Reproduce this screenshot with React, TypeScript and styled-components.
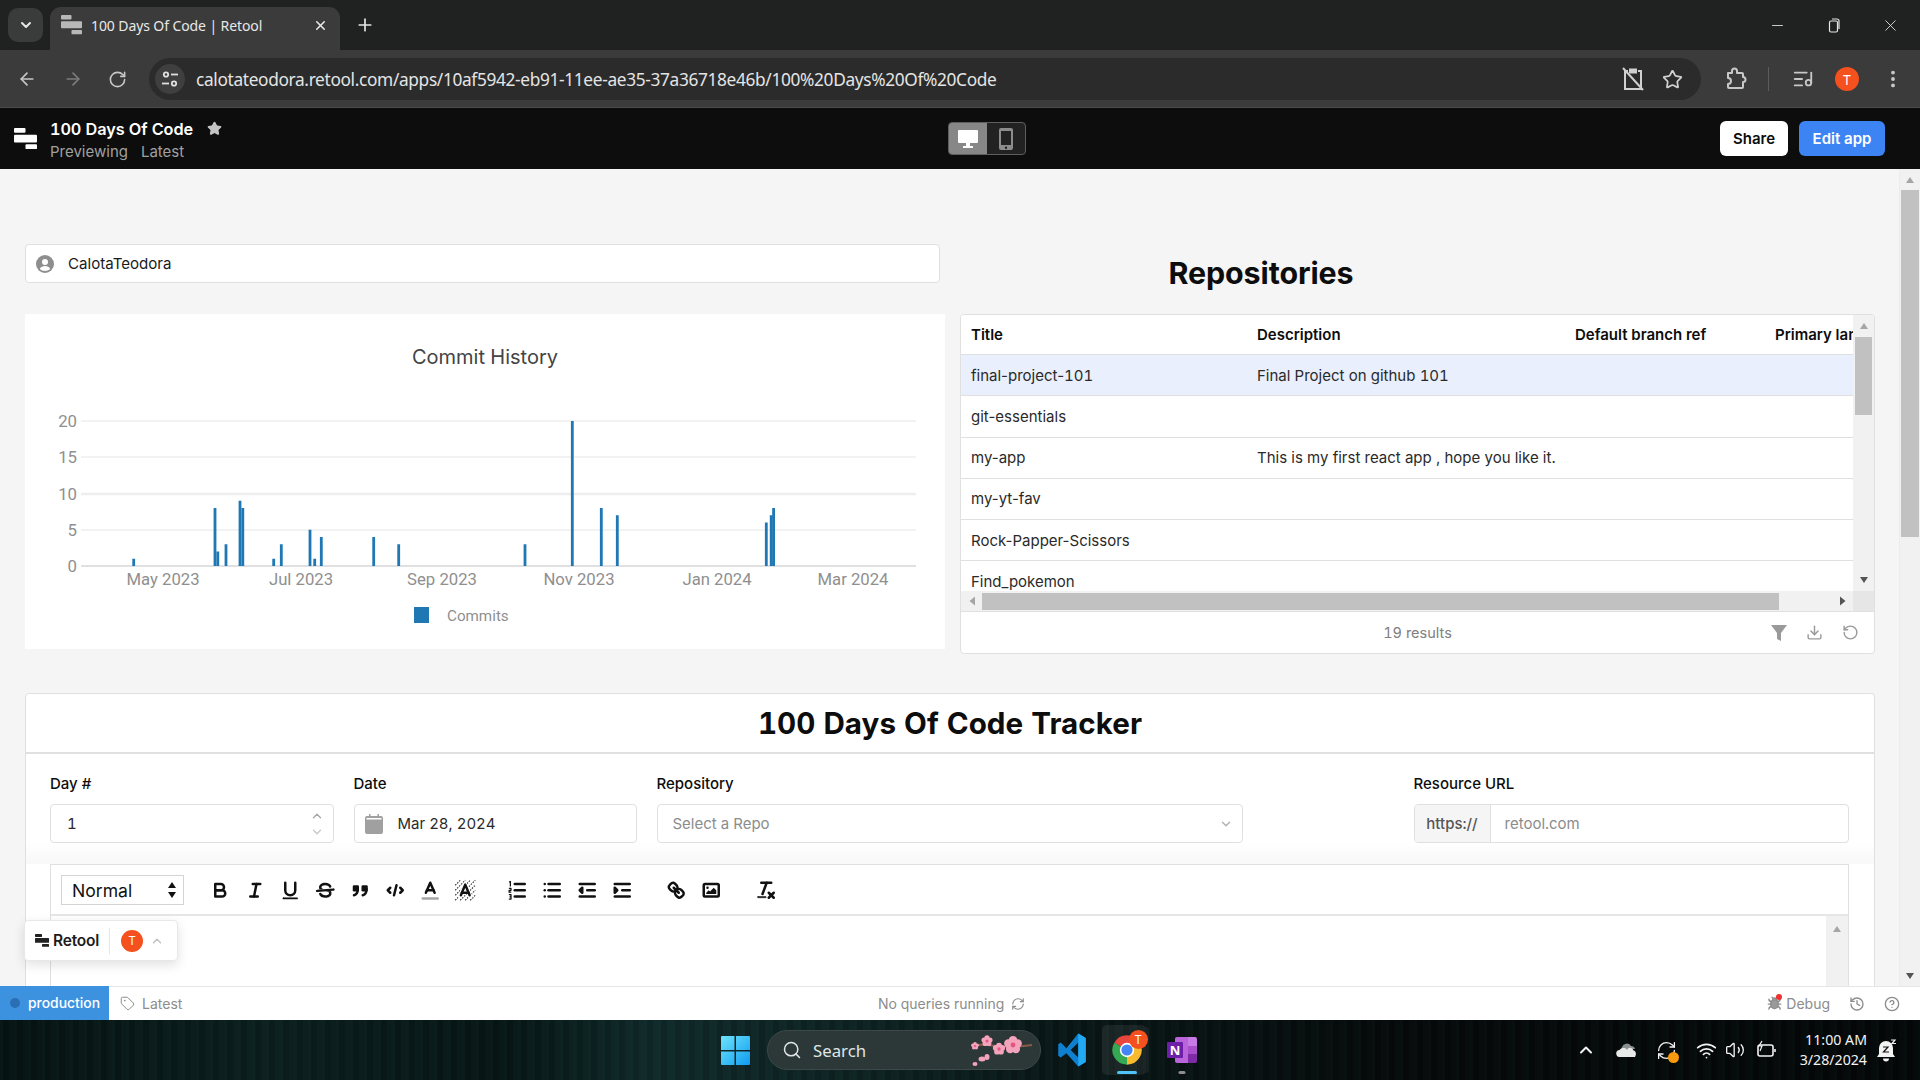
import React from 'react';
import styled, { createGlobalStyle } from 'styled-components';
import {
  ArrowLeft, ArrowRight, RotateCw, Plus, X, ChevronDown, ChevronUp, Star, Minus, EllipsisVertical,
  Search, Wifi, Volume2, Download, RotateCcw, Tag, History, CircleHelp, Bug, ListMusic, RefreshCw,
} from 'lucide-react';

const Global = createGlobalStyle`
  html, body { margin: 0; padding: 0; background: #111; overflow: hidden; }
  * { box-sizing: border-box; }
  body { font-family: Inter, "Liberation Sans", sans-serif; font-variant-numeric: tabular-nums; }
`;

const Screen = styled.div`
  width: 1920px; height: 1080px; display: flex; flex-direction: column; overflow: hidden; position: relative;
`;

/* ---------- browser chrome ---------- */
const TabStrip = styled.div`
  height: 50px; background: #202221; display: flex; align-items: flex-end; padding-left: 8px; color: #e6e6e6;
  font-family: "Noto Sans", Roboto, sans-serif; flex: none;
`;
const TabSearch = styled.div`
  width: 35px; height: 34px; margin-bottom: 8px; border-radius: 10px; background: #3a3b3b;
  display: flex; align-items: center; justify-content: center; color: #e6e6e6;
`;
const Tab = styled.div`
  width: 290px; height: 43px; margin-left: 7px; background: #3b3b3b; border-radius: 11px 11px 0 0;
  display: flex; align-items: center; padding: 0 12px 7px 11px; gap: 9px; font-size: 14px; color: #e8e8e8;
`;
const TabTitle = styled.span`flex: 1; white-space: nowrap; letter-spacing: -0.1px;`;
const TabPlus = styled.div`margin: 0 0 7px 15px; height: 36px; display: flex; align-items: center; color: #e6e6e6;`;
const WindowButtons = styled.div`
  margin-left: auto; height: 50px; display: flex; align-items: center; padding-right: 20px; gap: 39.5px; color: #e6e6e6;
`;
const Toolbar = styled.div`
  height: 58px; background: #3b3b3b; display: flex; align-items: center; padding: 1px 16px 0 17px; color: #c8c8c8;
  border-bottom: 1px solid #4a4a4a; flex: none;
`;
const NavButtons = styled.div`display: flex; gap: 25.7px; align-items: center; width: 133px;`;
const UrlBar = styled.div`
  width: 1552px; height: 42px; border-radius: 21px; background: #2b2b2b; display: flex; align-items: center;
  padding: 0 18px 0 6px; color: #e4e4e4; flex: none;
`;
const TuneBadge = styled.div`
  width: 30px; height: 30px; border-radius: 50%; background: #3f3f3f; display: flex; align-items: center; justify-content: center;
`;
const UrlText = styled.span`
  margin-left: 11px; font: 400 17.3px "Noto Sans", Roboto, sans-serif; letter-spacing: -0.345px; white-space: nowrap; flex: 1;
`;
const UrlActions = styled.div`display: flex; gap: 18.5px; align-items: center; color: #d0d0d0;`;
const ToolActions = styled.div`
  flex: 1; display: flex; align-items: center; padding-left: 24px; color: #c8c8c8;
`;
const ToolSep = styled.div`width: 1px; height: 24px; background: #5c5c5c; margin: 0 23px 0 21px;`;
const Avatar = styled.div<{ $size: number; $font: number }>`
  width: ${p => p.$size}px; height: ${p => p.$size}px; border-radius: 50%; background: #f4511e; color: #fff;
  display: flex; align-items: center; justify-content: center; font: 400 ${p => p.$font}px "Noto Sans", sans-serif; flex: none;
`;

/* ---------- retool app header ---------- */
const AppHeader = styled.header`
  height: 61px; background: #0d0d0d; display: flex; align-items: center; padding: 0 35px 0 14px; flex: none;
`;
const HeaderTitleBlock = styled.div`
  display: flex; flex-direction: column; margin-left: 13px; gap: 2px; width: 898px; padding-top: 2px;
`;
const TitleRow = styled.div`
  display: flex; align-items: center; gap: 14px; color: #fff; font-weight: 600; font-size: 16.3px; height: 22px; letter-spacing: -0.1px;
`;
const SubRow = styled.div`
  display: flex; gap: 13px; color: #a0a0a0; font-size: 15px; height: 20px; align-items: center;
`;
const ViewToggle = styled.div`
  width: 78px; height: 33px; border: 1px solid #5e5e5e; border-radius: 4px; background: #222; display: flex; overflow: hidden; flex: none;
`;
const ToggleCell = styled.div<{ $active?: boolean }>`
  flex: 1; display: flex; align-items: center; justify-content: center;
  background: ${p => (p.$active ? '#878787' : 'transparent')};
  color: ${p => (p.$active ? '#fff' : '#8c8c8c')};
`;
const HeaderActions = styled.div`margin-left: auto; display: flex; gap: 11px;`;
const HeaderButton = styled.button<{ $primary?: boolean }>`
  height: 35px; border: 0; border-radius: 6px; font: 600 15px Inter, sans-serif;
  width: ${p => (p.$primary ? '86px' : '68px')};
  background: ${p => (p.$primary ? '#3c84f4' : '#fff')};
  color: ${p => (p.$primary ? '#fff' : '#0d0d0d')};
  padding: 0;
`;

/* ---------- page ---------- */
const Viewport = styled.div`flex: 1; min-height: 0; display: flex; background: #f5f5f5; position: relative;`;
const PageContent = styled.main`flex: 1; min-width: 0; overflow: hidden; padding: 75px 24px 0 25px;`;
const TopGrid = styled.div`display: grid; grid-template-columns: 920px 915px; column-gap: 15px;`;
const LeftColumn = styled.div`display: flex; flex-direction: column; gap: 31px;`;
const RightColumn = styled.div`display: flex; flex-direction: column;`;
const NameInput = styled.div`
  width: 915px; height: 39px; background: #fff; border: 1px solid #e0e0e0; border-radius: 4px;
  display: flex; align-items: center; padding-left: 10px; gap: 14px; font-size: 15.1px; color: #1a1a1a;
`;
const ChartCard = styled.section`height: 335px; background: #fff; width: 920px;`;
const Heading = styled.h2`
  margin: 0; height: 70px; width: 602px; padding-top: 9px; text-align: center; font-size: 30.4px; font-weight: 700; color: #0d0d0d; line-height: 40px; letter-spacing: -0.1px;
`;
const TableCard = styled.section`
  height: 340px; background: #fff; border: 1px solid #e0e0e0; border-radius: 4px; display: flex; flex-direction: column; overflow: hidden;
`;
const TableBody = styled.div`height: 276px; display: flex; flex: none;`;
const TableMain = styled.div`flex: 1; min-width: 0; overflow: hidden;`;
const Row = styled.div<{ $head?: boolean; $selected?: boolean }>`
  height: ${p => (p.$head ? '40px' : '41.25px')}; display: grid; grid-template-columns: 286px 318px 200px 200px;
  border-bottom: 1px solid #e0e0e0; align-items: center; font-size: 15px; color: ${p => (p.$head ? '#0d0d0d' : '#2a2a2a')};
  font-weight: ${p => (p.$head ? 600 : 400)}; white-space: nowrap; font-variant-numeric: normal;
  background: ${p => (p.$selected ? '#e9effd' : '#fff')};
`;
const Cell = styled.div`padding-left: 10px; overflow: hidden;`;
const Digits = styled.span`font-variant-numeric: tabular-nums;`;
const VScroll = styled.div<{ $width: number }>`
  width: ${p => p.$width}px; background: #f1f1f1; display: flex; flex-direction: column; align-items: center; flex: none;
`;
const ScrollArrowBox = styled.div<{ $size: number }>`
  height: ${p => p.$size}px; width: 100%; display: flex; align-items: center; justify-content: center; flex: none;
`;
const VThumb = styled.div<{ $height: number; $inset: number }>`
  height: ${p => p.$height}px; width: calc(100% - ${p => p.$inset * 2}px); background: #c1c1c1; flex: none;
`;
const ScrollFill = styled.div`flex: 1;`;
const HScroll = styled.div`
  height: 21px; background: #f1f1f1; display: flex; align-items: center; flex: none; border-bottom: 1px solid #e0e0e0;
`;
const HArrow = styled.div`width: 21px; display: flex; justify-content: center; flex: none;`;
const HThumb = styled.div`width: 797px; height: 17px; background: #c1c1c1; flex: none;`;
const HCorner = styled.div`width: 21px; height: 100%; background: #e6e6e6; flex: none;`;
const TableFooter = styled.div`
  flex: 1; display: flex; align-items: center; padding-right: 15px; color: #808080; font-size: 14.5px; position: relative; justify-content: flex-end;
`;
const ResultCount = styled.span`position: absolute; left: 0; right: 0; text-align: center;`;
const FooterIcons = styled.div`display: flex; gap: 19px; color: #9a9a9a; align-items: center;`;

const TrackerCard = styled.section`
  margin-top: 39px; width: 1850px; height: 500px; background: #fff; border: 1px solid #e0e0e0; border-radius: 4px 4px 0 0;
`;
const TrackerHead = styled.div`
  height: 60px; border-bottom: 2px solid #e0e0e0; display: flex; align-items: center; justify-content: center;
  font-size: 29.6px; font-weight: 700; color: #0d0d0d; letter-spacing: 0.05px;
`;
const FormZone = styled.div`
  padding: 20px 25px 21px 24px; display: flex; gap: 19.5px;
  background: linear-gradient(#fff 0, #fff 88px, #f8f8f8 110px);
`;
const Field = styled.div<{ $width: number; $push?: boolean }>`
  width: ${p => p.$width}px; display: flex; flex-direction: column; gap: 10px; flex: none;
  margin-left: ${p => (p.$push ? 'auto' : '0')};
`;
const FieldLabel = styled.label`height: 20px; line-height: 20px; font-size: 15px; font-weight: 500; color: #0d0d0d;`;
const InputBox = styled.div<{ $muted?: boolean }>`
  height: 39px; border: 1px solid #e0e0e0; border-radius: 4px; background: #fff; display: flex; align-items: center;
  font-size: 15px; color: ${p => (p.$muted ? '#8c8c8c' : '#2a2a2a')}; overflow: hidden;
`;
const BoxPad = styled.span<{ $left: number }>`padding-left: ${p => p.$left}px; flex: 1;`;
const Spinner = styled.div`
  width: 31px; padding-right: 2px; display: flex; flex-direction: column; align-items: center; gap: 2px; color: #a6a6a6;
`;
const DateIcon = styled.span`margin-left: 10px; display: flex;`;
const SelectChevron = styled.span`padding-right: 9px; display: flex; color: #b0b0b0;`;
const Addon = styled.span`
  width: 76px; height: 100%; background: #f5f5f5; display: flex; align-items: center; justify-content: center;
  color: #555; font-weight: 500; border-right: 1px solid #e0e0e0; flex: none;
`;
const Editor = styled.div`margin: 0 25px 0 24px; border: 1px solid #e0e0e0; border-bottom: 0; background: #fff;`;
const EditorBar = styled.div`
  height: 51px; border-bottom: 2px solid #e6e6e6; display: flex; align-items: center; padding: 1px 0 0 10px;
`;
const FormatSelect = styled.div`
  width: 123px; height: 30px; border: 1px solid #d4d4d4; display: flex; align-items: center; justify-content: space-between;
  padding: 0 6px 0 10px; font-size: 17.6px; color: #111; margin-right: 24.5px;
`;
const ToolGroup = styled.div<{ $gap: number }>`display: flex; align-items: center; gap: 12.5px; margin-right: ${p => p.$gap}px;`;
const ToolIcon = styled.svg`
  width: 22.5px; height: 22.5px; fill: none; stroke: #111; stroke-width: 2; stroke-linecap: round; stroke-linejoin: round; flex: none;
`;
const EditorBody = styled.div`height: 200px; display: flex; justify-content: flex-end;`;

const PageScroll = styled(VScroll)`border-left: 1px solid #ececec;`;

/* floating badge */
const RetoolBadge = styled.div`
  position: absolute; left: 24px; bottom: 25px; width: 154px; height: 41px; background: #fff; border: 1px solid #e8e8e8; border-radius: 4px;
  box-shadow: 0 4px 12px rgba(0,0,0,0.12); display: flex; align-items: center; padding-left: 10px;
`;
const BadgeName = styled.span`font-size: 15.5px; font-weight: 600; color: #1c1c1c; margin-left: 4px; letter-spacing: -0.2px;`;
const BadgeDivider = styled.div`width: 1px; height: 26px; background: #e6e6e6; margin: 0 11px 0 10px;`;

/* ---------- status bar ---------- */
const StatusBar = styled.footer`
  height: 34px; background: #fff; border-top: 1px solid #e6e6e6; display: flex; align-items: center; flex: none;
  font-size: 14px; color: #8c8c8c; position: relative;
`;
const EnvChip = styled.div`
  width: 109px; height: 34px; margin-top: -1px; background: #3d92e0; color: #fff; font-weight: 500; font-size: 13.9px; display: flex; align-items: center; padding-left: 10px; gap: 8px; flex: none;
`;
const EnvDot = styled.span`width: 10px; height: 10px; border-radius: 50%; background: #2a6fb3;`;
const StatusTag = styled.div`display: flex; align-items: center; gap: 7px; margin-left: 11px; width: 758px;`;
const StatusMiddle = styled.div`display: flex; align-items: center; gap: 7px; width: 390px;`;
const StatusRight = styled.div`margin-left: auto; display: flex; align-items: center; padding-right: 20px;`;
const DebugLabel = styled.span`margin-left: 4px; margin-right: 19px;`;
const BugWrap = styled.span`position: relative; display: flex;`;
const BugDot = styled.span`position: absolute; top: -2px; right: 0; width: 6px; height: 6px; border-radius: 50%; background: #f03030;`;

/* ---------- taskbar ---------- */
const Taskbar = styled.div`
  height: 60px; flex: none; display: flex; align-items: center; color: #fff; padding-left: 721px; font-family: "Noto Sans", sans-serif;
  background:
    repeating-linear-gradient(90deg, rgba(60,110,105,0.05) 0 3px, rgba(0,0,0,0.08) 3px 9px, rgba(60,110,105,0.03) 9px 14px),
    linear-gradient(90deg, #061312 0%, #0b1f1e 14%, #071615 26%, #10292a 34%, #0e2222 45%, #0a1717 55%, #060a0b 72%, #040708 100%);
`;
const SearchPill = styled.div`
  width: 274px; height: 40px; margin-left: 17px; border-radius: 20px; background: #2c3838; display: flex; align-items: center; padding-left: 14px; gap: 11px;
  font-size: 16.8px; color: #dfe5e5; border: 1px solid #3d4848;
`;
const PillArt = styled.span`margin-left: auto; margin-right: 6px; display: flex;`;
const TaskIcon = styled.div<{ $left: number; $width: number; $active?: boolean }>`
  width: ${p => p.$width}px; height: 50px; margin-left: ${p => p.$left}px; display: flex; align-items: center; justify-content: center; position: relative; flex: none;
  border-radius: 5px; background: ${p => (p.$active ? 'rgba(255,255,255,0.07)' : 'transparent')};
  padding-left: ${p => (p.$active ? '6px' : '0')};
  box-shadow: ${p => (p.$active ? '5px 0 0 -2px rgba(255,255,255,0.05)' : 'none')};
`;
const TaskBadge = styled.div`position: absolute; top: 4.5px; right: -1.5px;`;
const TaskMark = styled.span<{ $active?: boolean }>`
  position: absolute; bottom: 1px; left: ${p => (p.$active ? '57%' : '50%')}; transform: translateX(-50%); height: 3.5px; border-radius: 2px;
  width: ${p => (p.$active ? '20px' : '7px')}; background: ${p => (p.$active ? '#4fc3f7' : '#8d8d8d')};
`;
const Tray = styled.div`
  margin-left: auto; display: flex; align-items: center; height: 100%; padding-right: 23px; color: #f2f2f2;
`;
const TrayItem = styled.span<{ $left: number }>`margin-left: ${p => p.$left}px; display: flex; position: relative;`;
const SyncDot = styled.span`position: absolute; right: -2px; bottom: -2px; width: 11px; height: 11px; border-radius: 50%; background: #f79a0e;`;
const Clock = styled.div`
  margin-left: 5px; display: flex; flex-direction: column; align-items: flex-end; font-size: 14.2px; line-height: 20px; width: 85px;
`;

/* ---------- drawings ---------- */
const RetoolLogo = ({ w, color }: { w: number; color: string }) => (
  <svg width={w} height={w * 0.92} viewBox="0 0 24 22" fill={color}>
    <rect x="0" y="0" width="12" height="5" rx="1" />
    <rect x="0" y="7" width="24" height="8" rx="1" />
    <rect x="12" y="17" width="12" height="5" rx="1" />
  </svg>
);
const TriIcon = ({ dir, color = '#8a8a8a', s = 10 }: { dir: 'u' | 'd' | 'l' | 'r'; color?: string; s?: number }) => {
  const pts = { u: '1,8 9,8 5,2', d: '1,2 9,2 5,8', l: '8,0.5 8,9.5 2.5,5', r: '2,0.5 2,9.5 7.5,5' }[dir];
  return <svg width={s} height={s} viewBox="0 0 10 10"><polygon points={pts} fill={color} /></svg>;
};

const bars: [number, number][] = [
  [133.7, 1], [215, 8], [217.8, 2], [226, 3], [240, 9], [242.8, 8], [273.7, 1], [281.3, 3], [310, 5], [314.7, 1], [321.3, 4],
  [373.7, 4], [398.7, 3], [525, 3], [572.3, 20], [601.3, 8], [617.3, 7], [766.3, 6], [771.2, 7], [773.6, 8],
];
const months: [number, string][] = [[163, 'May 2023'], [301, 'Jul 2023'], [442, 'Sep 2023'], [579, 'Nov 2023'], [717, 'Jan 2024'], [853, 'Mar 2024']];
const gridVals: [number, number, number][] = [[20, 421, 1.5], [15, 457, 1.5], [10, 494, 2.5], [5, 530, 1.5], [0, 566, 1.5]];

const CommitChart = () => (
  <svg width="920" height="335" viewBox="25 314 920 335" fontFamily="Roboto, Inter, sans-serif">
    <text x="485" y="364" textAnchor="middle" fontSize="20" fontFamily="Inter, sans-serif" fill="#444">Commit History</text>
    {gridVals.map(([v, y, sw]) => (
      <g key={v}>
        <line x1="81" x2="916" y1={y} y2={y} stroke={v === 0 ? '#d6d6d6' : '#eeeeee'} strokeWidth={sw} />
        <text x="77" y={y + 6} textAnchor="end" fontSize="16.8" fill="#8f8f8f">{v}</text>
      </g>
    ))}
    {bars.map(([x, v]) => (
      <rect key={x} x={x - 1.4} width="2.8" y={566 - v * 7.25} height={v * 7.25} fill="#1f77b4" />
    ))}
    {months.map(([x, t]) => (
      <text key={t} x={x} y="585" textAnchor="middle" fontSize="16.7" fill="#8f8f8f">{t}</text>
    ))}
    <rect x="414" y="607" width="15" height="16" fill="#1f77b4" />
    <text x="447" y="621" fontSize="15.2" fill="#8f8f8f">Commits</text>
  </svg>
);

const UserCircle = () => (
  <svg width="18" height="18" viewBox="0 0 18 18">
    <circle cx="9" cy="9" r="9" fill="#8e8e8e" />
    <circle cx="9" cy="7" r="3" fill="#fff" />
    <path d="M3.8 14c1-2.200 3-3 5.200-3s4.200.8 5.200 3c-1.300 1.300-3.100 2-5.200 2s-3.900-.7-5.200-2z" fill="#fff" />
  </svg>
);

const qlIcons: Record<string, React.ReactNode> = {
  bold: <><path d="M5,4H9.500A2.500,2.500,0,0,1,12,6.500v0A2.500,2.500,0,0,1,9.500,9H5V4Z" /><path d="M5,9h5.500A2.500,2.500,0,0,1,13,11.500v0A2.500,2.500,0,0,1,10.500,14H5V9Z" /></>,
  italic: <><line x1="7" x2="13" y1="4" y2="4" /><line x1="5" x2="11" y1="14" y2="14" /><line x1="8" x2="10" y1="14" y2="4" /></>,
  underline: <><path d="M5,3V9a4,4,0,0,0,8,0V3" /><rect x="3" y="15" width="12" height="1" rx=".5" fill="#111" strokeWidth="0.4" /></>,
  strike: <><line x1="15.500" x2="2.500" y1="8.500" y2="9.500" /><path stroke="none" fill="#111" d="M9.007,8C6.542,7.791,6,7.519,6,6.500,6,5.792,7.283,5,9,5c1.571,0,2.765.679,2.969,1.309a1,1,0,0,0,1.900-.617C13.356,4.106,11.354,3,9,3,6.200,3,4,4.538,4,6.500a3.200,3.200,0,0,0,.5,1.843Z" /><path stroke="none" fill="#111" d="M8.984,10C11.457,10.208,12,10.479,12,11.500c0,.708-1.283,1.500-3,1.500-1.571,0-2.765-.679-2.969-1.309a1,1,0,1,0-1.900.617C4.644,13.894,6.646,15,9,15c2.800,0,5-1.538,5-3.500a3.200,3.200,0,0,0-.5-1.843Z" /></>,
  quote: <><rect x="3" y="5" width="5" height="5" rx="1" fill="#111" stroke="none" /><rect x="10" y="5" width="5" height="5" rx="1" fill="#111" stroke="none" /><path d="M7,8c0,3-1,4.500-3,5" /><path d="M14,8c0,3-1,4.500-3,5" /></>,
  code: <><polyline points="5 7 3 9 5 11" /><polyline points="13 7 15 9 13 11" /><line x1="10" x2="8" y1="5" y2="13" /></>,
  color: <><line x1="3" x2="15" y1="15.500" y2="15.500" stroke="#a6a6a6" /><polyline points="5.500 11 9 3 12.500 11" /><line x1="11.630" x2="6.380" y1="9" y2="9" /></>,
  background: <>
    <g stroke="#333" strokeWidth="0.9" strokeLinecap="butt" strokeDasharray="1.200 1">
      <line x1="1" y1="5" x2="5" y2="1" /><line x1="1" y1="9" x2="9" y2="1" /><line x1="1" y1="13" x2="13" y2="1" />
      <line x1="1" y1="17" x2="17" y2="1" /><line x1="5" y1="17" x2="17" y2="5" /><line x1="9" y1="17" x2="17" y2="9" /><line x1="13" y1="17" x2="17" y2="13" />
    </g>
    <polyline points="5 14 9 4.500 13 14" stroke="#fff" strokeWidth="3.600" />
    <polyline points="5.500 13 9 4.500 12.500 13" />
    <line x1="11.630" x2="6.380" y1="11" y2="11" />
  </>,
  ol: <><line x1="7" x2="15" y1="4" y2="4" /><line x1="7" x2="15" y1="9" y2="9" /><line x1="7" x2="15" y1="14" y2="14" /><g strokeWidth="1" strokeLinecap="butt"><path d="M2.500 2.500l1-.5v4" /><path d="M2.300 7.500h1.700v1.500h-1.500v1.500h1.700" /><path d="M2.300 12.500h1.700v3.500h-1.700M2.800 14.200h1" /></g></>,
  ul: <><line x1="6" x2="15" y1="4" y2="4" /><line x1="6" x2="15" y1="9" y2="9" /><line x1="6" x2="15" y1="14" y2="14" /><line x1="3" x2="3" y1="4" y2="4" /><line x1="3" x2="3" y1="9" y2="9" /><line x1="3" x2="3" y1="14" y2="14" /></>,
  outdent: <><line x1="3" x2="15" y1="14" y2="14" /><line x1="3" x2="15" y1="4" y2="4" /><line x1="9" x2="15" y1="9" y2="9" /><polygon points="5 7 5 11 3 9 5 7" fill="#111" /></>,
  indent: <><line x1="3" x2="15" y1="14" y2="14" /><line x1="3" x2="15" y1="4" y2="4" /><line x1="9" x2="15" y1="9" y2="9" /><polygon points="3 7 3 11 5 9 3 7" fill="#111" /></>,
  link: <><line x1="7" x2="11" y1="7" y2="11" /><path d="M8.900,4.577a3.476,3.476,0,0,1,.36,4.679A3.476,3.476,0,0,1,4.577,8.900C3.185,7.500,2.035,6.400,4.217,4.217S7.500,3.185,8.900,4.577Z" /><path d="M13.423,9.100a3.476,3.476,0,0,0-4.679-.36,3.476,3.476,0,0,0,.36,4.679c1.392,1.392,2.500,2.542,4.679.36S14.815,10.500,13.423,9.100Z" /></>,
  image: <><rect x="3" y="4" width="12" height="10" rx="1" /><circle cx="6" cy="7" r="1" fill="#111" stroke="none" /><polygon points="5 12 5 11 7 9 8 10 11 7 13 9 13 12 5 12" fill="#111" stroke="none" /></>,
  clean: <><line x1="5" x2="13" y1="3" y2="3" /><line x1="6" x2="9.350" y1="12" y2="3" /><line x1="11" x2="15" y1="11" y2="15" /><line x1="15" x2="11" y1="11" y2="15" /><rect x="2" y="14" width="7" height="1" rx=".5" fill="#111" strokeWidth="0.4" /></>,
};
const Ql = ({ name }: { name: string }) => <ToolIcon viewBox="0 0 18 18">{qlIcons[name]}</ToolIcon>;

const Tune = () => (
  <svg width="20" height="20" viewBox="0 0 20 20" fill="none" stroke="#e0e0e0" strokeWidth="1.800">
    <circle cx="6" cy="5.500" r="2.200" /><line x1="11" x2="18" y1="5.500" y2="5.500" />
    <circle cx="14" cy="14.500" r="2.200" /><line x1="2" x2="9" y1="14.500" y2="14.500" />
  </svg>
);
const ClipSlash = () => (
  <svg width="22" height="24" viewBox="0 0 22 24" fill="none" stroke="#d0d0d0" strokeWidth="2">
    <path d="M6 4H3v18h16V4h-3" /><rect x="7" y="1.500" width="8" height="5" fill="#d0d0d0" stroke="none" /><line x1="1" y1="1" x2="21" y2="23" />
  </svg>
);
const ExtensionIcon = () => (
  <svg width="22" height="24" viewBox="0 0 22 24" fill="none" stroke="#c8c8c8" strokeWidth="2" strokeLinejoin="round">
    <path d="M3 6h4V4a2.500 2.500 0 0 1 5 0v2h5a1 1 0 0 1 1 1v3a2.500 2.500 0 0 1 0 5v5a1 1 0 0 1-1 1H4a1 1 0 0 1-1-1v-3a3 3 0 0 0 0-6V6z" />
  </svg>
);
const Desktop = () => (
  <svg width="22" height="22" viewBox="0 0 22 22" fill="currentColor">
    <path d="M2 2h18a1 1 0 0 1 1 1v11a1 1 0 0 1-1 1h-7v3h3v2H6v-2h3v-3H2a1 1 0 0 1-1-1V3a1 1 0 0 1 1-1z" />
  </svg>
);
const Phone = () => (
  <svg width="14" height="22" viewBox="0 0 14 22" fill="currentColor">
    <path fillRule="evenodd" d="M2 0h10a2 2 0 0 1 2 2v18a2 2 0 0 1-2 2H2a2 2 0 0 1-2-2V2a2 2 0 0 1 2-2zm0 3v14h10V3zm5 15.500a1.200 1.200 0 1 0 0 2.400 1.200 1.200 0 0 0 0-2.400z" />
  </svg>
);
const CalendarFill = () => (
  <svg width="18" height="20" viewBox="0 0 18 20" fill="#a0a0a0">
    <path d="M4 0h1.500v2h7V0H14v2h2a2 2 0 0 1 2 2v14a2 2 0 0 1-2 2H2a2 2 0 0 1-2-2V4a2 2 0 0 1 2-2h2z" />
    <rect x="1.500" y="4" width="15" height="1.500" fill="#fff" />
  </svg>
);
const FunnelIcon = () => (
  <svg width="16" height="18" viewBox="0 0 16 18"><path d="M0 1h16L10 9v8l-4-2V9z" fill="#9a9a9a" /></svg>
);
const UpDown = () => (
  <svg width="10" height="16" viewBox="0 0 10 16" fill="#111"><path d="M5 0l4 6H1zM5 16l4-6H1z" /></svg>
);
const WinLogo = () => (
  <svg width="29" height="29" viewBox="0 0 29 29">
    <defs><linearGradient id="wg" x1="0" y1="0" x2="1" y2="1"><stop offset="0" stopColor="#6ee4fb" /><stop offset="1" stopColor="#0f9bf0" /></linearGradient></defs>
    <path fill="url(#wg)" d="M1 0h12.500v14H0V1a1 1 0 0 1 1-1zM15 0h13a1 1 0 0 1 1 1v13H15zM0 15.500h13.500V29H1a1 1 0 0 1-1-1zM15 15.500h14V28a1 1 0 0 1-1 1H15z" />
  </svg>
);
const flower = (cx: number, cy: number, r: number) => (
  <g key={`${cx}-${cy}`}>
    {[0, 72, 144, 216, 288].map(a => (
      <circle key={a} cx={cx + Math.cos((a - 90) * Math.PI / 180) * r * 0.62} cy={cy + Math.sin((a - 90) * Math.PI / 180) * r * 0.62} r={r * 0.52} fill="#f4a3bd" />
    ))}
    <circle cx={cx} cy={cy} r={r * 0.3} fill="#e4567f" />
  </g>
);
const Blossom = () => (
  <svg width="64" height="38" viewBox="0 0 64 38">
    <path d="M5 15c8-3 14-1 20 0 12 2 24 1 37-1" stroke="#8b5a48" strokeWidth="2.200" fill="none" />
    {flower(43, 14, 8)}
    {flower(29, 18, 5.500)}
    {flower(17, 10, 5)}
    {flower(5, 15, 3.500)}
    <ellipse cx="12" cy="28" rx="3.500" ry="2.500" fill="#f4a3bd" />
    <ellipse cx="17" cy="26" rx="2.500" ry="3" fill="#f4a3bd" />
    <ellipse cx="5" cy="33" rx="2.500" ry="2" fill="#f4a3bd" />
  </svg>
);
const VsCode = () => (
  <svg width="30" height="36" viewBox="0 0 24 24" preserveAspectRatio="none">
    <path fill="#0f7fd0" fillRule="evenodd" d="M17 1l6 3v16l-6 3-9.500-8.800L3 17l-2-1.200V8.200L3 7l4.500 3.800zM17 7l-6 5 6 5z" />
    <path fill="#23a9f2" d="M17 1l6 3v16l-6 3V17 7z" />
  </svg>
);
const ChromeLogo = () => (
  <svg width="32" height="32" viewBox="0 0 24 24">
    <path fill="#e8453c" d="M12 12L2.470 6.500A11 11 0 0 1 21.530 6.500Z" />
    <path fill="#f9bb2d" d="M12 12L21.530 6.500A11 11 0 0 1 12 23Z" />
    <path fill="#34a853" d="M12 12L12 23A11 11 0 0 1 2.470 6.500Z" />
    <circle cx="12" cy="12" r="5.400" fill="#fff" /><circle cx="12" cy="12" r="4.200" fill="#4285f4" />
  </svg>
);
const NoteTile = styled.div`
  width: 22px; height: 26px; margin-left: 8px; position: relative; border-radius: 2px;
  background:
    linear-gradient(#c77ae6 33%, #a84fc9 33% 66%, #7f2ba6 66%) right / 9px 100% no-repeat,
    #b964da;
`;
const NoteLetter = styled.span`
  position: absolute; left: -8px; top: 5px; width: 16px; height: 16px; background: #6e1fa8; color: #fff; font: 700 13px/16px "Noto Sans", sans-serif; text-align: center; border-radius: 1px;
`;
const BatteryIcon = () => (
  <svg width="21" height="20" viewBox="0 0 21 20" fill="none" stroke="#f2f2f2" strokeWidth="1.600">
    <rect x="2" y="5" width="15" height="11" rx="2" /><path d="M19 9v3" /><path d="M6 1l-3 5h3l-2 5" strokeWidth="1.200" />
  </svg>
);
const CloudIcon = () => (
  <svg width="21" height="14" viewBox="0 0 21 14">
    <path d="M6 4a5 5 0 0 1 9-1 4 4 0 0 1 4 3H5z" fill="#8a9090" /><path d="M4 14a3.500 3.500 0 0 1-.5-7C6 4 10 5 11 6.500a3.500 3.500 0 0 1 6.500 1c2 0 3.500 3 1.500 6.500z" fill="#e8e8e8" />
  </svg>
);
const BellZ = () => (
  <svg width="20" height="24" viewBox="0 0 20 24">
    <path d="M9 3a7 7 0 0 1 7 7v6l2 3H0l2-3v-6a7 7 0 0 1 7-7zM6 20.500h6a3 3 0 0 1-6 0z" fill="#f2f2f2" />
    <path d="M6 9h5l-4.500 5H12" fill="none" stroke="#111" strokeWidth="1.200" />
    <path d="M14 2h4l-3 3.500h4" fill="none" stroke="#f2f2f2" strokeWidth="1.200" />
  </svg>
);

const repos: [string, string][] = [
  ['final-project-101', 'Final Project on github 101'],
  ['git-essentials', ''],
  ['my-app', 'This is my first react app , hope you like it.'],
  ['my-yt-fav', ''],
  ['Rock-Papper-Scissors', ''],
  ['Find_pokemon', ''],
];

const withDigits = (s: string) =>
  s.split(/(\d+)/).map((part, i) => (i % 2 === 1 ? <Digits key={i}>{part}</Digits> : part));

export default function App() {
  return (
    <Screen>
      <Global />
      <TabStrip>
        <TabSearch><ChevronDown size={16} strokeWidth={3} /></TabSearch>
        <Tab>
          <RetoolLogo w={21} color="#b8b8b8" />
          <TabTitle>100 Days Of Code | Retool</TabTitle>
          <X size={15} strokeWidth={2.5} />
        </Tab>
        <TabPlus><Plus size={20} /></TabPlus>
        <WindowButtons>
          <Minus size={17} strokeWidth={1.2} />
          <svg width="16" height="16" viewBox="0 0 16 16" fill="none" stroke="#e6e6e6" strokeWidth="1.200"><rect x="3.500" y="4" width="8" height="11" rx="1.500" /><path d="M6 2h5a2 2 0 0 1 2 2v8" /></svg>
          <X size={19} strokeWidth={1.1} />
        </WindowButtons>
      </TabStrip>
      <Toolbar>
        <NavButtons>
          <ArrowLeft size={20} strokeWidth={2} />
          <ArrowRight size={20} strokeWidth={2} color="#7c7c7c" />
          <RotateCw size={19} strokeWidth={2} />
        </NavButtons>
        <UrlBar>
          <TuneBadge><Tune /></TuneBadge>
          <UrlText>calotateodora.retool.com/apps/10af5942-eb91-11ee-ae35-37a36718e46b/100%20Days%20Of%20Code</UrlText>
          <UrlActions>
            <ClipSlash />
            <Star size={21} strokeWidth={2} />
          </UrlActions>
        </UrlBar>
        <ToolActions>
          <ExtensionIcon />
          <ToolSep />
          <ListMusic size={22} strokeWidth={2} />
          <Avatar $size={24} $font={14} style={{ marginLeft: 21 }}>T</Avatar>
          <EllipsisVertical size={22} strokeWidth={2.2} style={{ marginLeft: 23 }} />
        </ToolActions>
      </Toolbar>

      <AppHeader>
        <RetoolLogo w={23} color="#fff" />
        <HeaderTitleBlock>
          <TitleRow>100 Days Of Code <Star size={15} fill="#c4c4c4" color="#c4c4c4" /></TitleRow>
          <SubRow><span>Previewing</span><span>Latest</span></SubRow>
        </HeaderTitleBlock>
        <ViewToggle>
          <ToggleCell $active><Desktop /></ToggleCell>
          <ToggleCell><Phone /></ToggleCell>
        </ViewToggle>
        <HeaderActions>
          <HeaderButton>Share</HeaderButton>
          <HeaderButton $primary>Edit app</HeaderButton>
        </HeaderActions>
      </AppHeader>

      <Viewport>
        <PageContent>
          <TopGrid>
            <LeftColumn>
              <NameInput><UserCircle />CalotaTeodora</NameInput>
              <ChartCard><CommitChart /></ChartCard>
            </LeftColumn>
            <RightColumn>
              <Heading>Repositories</Heading>
              <TableCard>
                <TableBody>
                  <TableMain>
                    <Row $head>
                      <Cell>Title</Cell><Cell>Description</Cell><Cell>Default branch ref</Cell><Cell>Primary language</Cell>
                    </Row>
                    {repos.map(([t, d], i) => (
                      <Row key={t} $selected={i === 0}>
                        <Cell>{withDigits(t)}</Cell><Cell>{withDigits(d)}</Cell><Cell /><Cell />
                      </Row>
                    ))}
                  </TableMain>
                  <VScroll $width={21}>
                    <ScrollArrowBox $size={22}><TriIcon dir="u" color="#a6a6a6" /></ScrollArrowBox>
                    <VThumb $height={78} $inset={2} />
                    <ScrollFill />
                    <ScrollArrowBox $size={22}><TriIcon dir="d" color="#555" /></ScrollArrowBox>
                  </VScroll>
                </TableBody>
                <HScroll>
                  <HArrow><TriIcon dir="l" color="#a6a6a6" /></HArrow>
                  <HThumb />
                  <ScrollFill />
                  <HArrow><TriIcon dir="r" color="#555" /></HArrow>
                  <HCorner />
                </HScroll>
                <TableFooter>
                  <ResultCount>19 results</ResultCount>
                  <FooterIcons>
                    <FunnelIcon />
                    <Download size={17} />
                    <RotateCcw size={17} />
                  </FooterIcons>
                </TableFooter>
              </TableCard>
            </RightColumn>
          </TopGrid>

          <TrackerCard>
            <TrackerHead>100 Days Of Code Tracker</TrackerHead>
            <FormZone>
              <Field $width={284}>
                <FieldLabel>Day #</FieldLabel>
                <InputBox>
                  <BoxPad $left={16}>1</BoxPad>
                  <Spinner><ChevronUp size={14} strokeWidth={2.2} /><ChevronDown size={14} strokeWidth={2.2} color="#c6c6c6" /></Spinner>
                </InputBox>
              </Field>
              <Field $width={283.5}>
                <FieldLabel>Date</FieldLabel>
                <InputBox>
                  <DateIcon><CalendarFill /></DateIcon>
                  <BoxPad $left={15}>Mar 28, 2024</BoxPad>
                </InputBox>
              </Field>
              <Field $width={586}>
                <FieldLabel>Repository</FieldLabel>
                <InputBox $muted>
                  <BoxPad $left={15}>Select a Repo</BoxPad>
                  <SelectChevron><ChevronDown size={14} strokeWidth={2.4} /></SelectChevron>
                </InputBox>
              </Field>
              <Field $width={435.5} $push>
                <FieldLabel>Resource URL</FieldLabel>
                <InputBox $muted>
                  <Addon>https://</Addon>
                  <BoxPad $left={14}>retool.com</BoxPad>
                </InputBox>
              </Field>
            </FormZone>
            <Editor>
              <EditorBar>
                <FormatSelect>Normal<UpDown /></FormatSelect>
                <ToolGroup $gap={30}>
                  {['bold', 'italic', 'underline', 'strike', 'quote', 'code', 'color', 'background'].map(n => <Ql key={n} name={n} />)}
                </ToolGroup>
                <ToolGroup $gap={31.5}>
                  {['ol', 'ul', 'outdent', 'indent'].map(n => <Ql key={n} name={n} />)}
                </ToolGroup>
                <ToolGroup $gap={32}>
                  {['link', 'image'].map(n => <Ql key={n} name={n} />)}
                </ToolGroup>
                <ToolGroup $gap={0}><Ql name="clean" /></ToolGroup>
              </EditorBar>
              <EditorBody>
                <VScroll $width={22}>
                  <ScrollArrowBox $size={26}><TriIcon dir="u" color="#a6a6a6" /></ScrollArrowBox>
                </VScroll>
              </EditorBody>
            </Editor>
          </TrackerCard>
        </PageContent>
        <PageScroll $width={21}>
          <ScrollArrowBox $size={21}><TriIcon dir="u" color="#a6a6a6" /></ScrollArrowBox>
          <VThumb $height={347} $inset={1} />
          <ScrollFill />
          <ScrollArrowBox $size={21}><TriIcon dir="d" color="#555" /></ScrollArrowBox>
        </PageScroll>
        <RetoolBadge>
          <RetoolLogo w={14} color="#222" />
          <BadgeName>Retool</BadgeName>
          <BadgeDivider />
          <Avatar $size={22} $font={12}>T</Avatar>
          <ChevronUp size={14} strokeWidth={2.4} color="#c0c0c0" style={{ marginLeft: 7 }} />
        </RetoolBadge>
      </Viewport>

      <StatusBar>
        <EnvChip><EnvDot />production</EnvChip>
        <StatusTag><Tag size={15} strokeWidth={1.6} />Latest</StatusTag>
        <StatusMiddle>No queries running <RefreshCw size={14} /></StatusMiddle>
        <StatusRight>
          <BugWrap><Bug size={15} fill="#9a9a9a" /><BugDot /></BugWrap>
          <DebugLabel>Debug</DebugLabel>
          <History size={16} style={{ marginRight: 19 }} />
          <CircleHelp size={16} />
        </StatusRight>
      </StatusBar>

      <Taskbar>
        <WinLogo />
        <SearchPill>
          <Search size={20} strokeWidth={1.8} />
          Search
          <PillArt><Blossom /></PillArt>
        </SearchPill>
        <TaskIcon $left={6.5} $width={49}><VsCode /></TaskIcon>
        <TaskIcon $left={5.5} $width={44} $active>
          <ChromeLogo />
          <TaskBadge><Avatar $size={19} $font={12}>T</Avatar></TaskBadge>
          <TaskMark $active />
        </TaskIcon>
        <TaskIcon $left={11.5} $width={49}>
          <NoteTile><NoteLetter>N</NoteLetter></NoteTile>
          <TaskMark />
        </TaskIcon>
        <Tray>
          <ChevronUp size={20} strokeWidth={2.4} />
          <TrayItem $left={20}><CloudIcon /></TrayItem>
          <TrayItem $left={19}><RefreshCw size={21} strokeWidth={1.5} /><SyncDot /></TrayItem>
          <TrayItem $left={19}><Wifi size={21} strokeWidth={2} /></TrayItem>
          <TrayItem $left={8}><Volume2 size={20} strokeWidth={1.6} /></TrayItem>
          <TrayItem $left={11}><BatteryIcon /></TrayItem>
          <Clock><span>11:00 AM</span><span>3/28/2024</span></Clock>
          <TrayItem $left={10}><BellZ /></TrayItem>
        </Tray>
      </Taskbar>
    </Screen>
  );
}
